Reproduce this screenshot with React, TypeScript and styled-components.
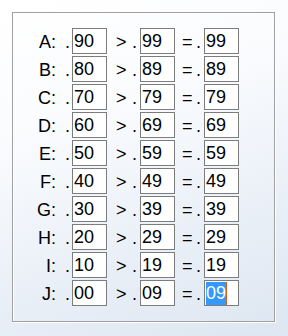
import styled, { createGlobalStyle } from "styled-components";

const GlobalStyle = createGlobalStyle`
	html, body {
		margin: 0;
		padding: 0;
	}
	body {
		font-family: "Liberation Sans", Arial, sans-serif;
		background: linear-gradient(160deg, #ffffff 0%, #fbfcfe 30%, #e9eff7 70%, #dde6f1 100%);
		min-height: 336px;
		width: 288px;
		overflow: hidden;
	}
`;

const Page = styled.div`
	padding: 12px;
	width: 288px;
	height: 336px;
	box-sizing: border-box;
`;

const GroupBox = styled.div`
	width: 263px;
	height: 310px;
	box-sizing: border-box;
	border: 1px solid #a0a0a0;
	box-shadow: 1px 1px 0 #ffffff, inset 1px 1px 0 #ffffff;
	padding-top: 15px;
	display: flex;
	flex-direction: column;
	gap: 2px;
`;

const Row = styled.div`
	display: flex;
	align-items: flex-start;
	height: 26px;
	font-size: 18px;
	color: #000;
`;

const Label = styled.span`
	width: 44px;
	padding-right: 1px;
	box-sizing: border-box;
	text-align: right;
	line-height: 28px;
	height: 26px;
`;

const Dot = styled.span`
	width: 15px;
	padding-right: 2px;
	box-sizing: border-box;
	text-align: right;
	line-height: 28px;
	height: 26px;
`;

const Op = styled.span<{ $width: number; $lead: number }>`
	width: ${({ $width }) => $width}px;
	padding-left: ${({ $lead }) => $lead}px;
	padding-right: 3px;
	box-sizing: border-box;
	display: flex;
	justify-content: space-between;
	line-height: 28px;
	height: 26px;
`;

const Field = styled.div`
	width: 35px;
	height: 26px;
	box-sizing: border-box;
	border: 1px solid #7c7c7c;
	background: #ffffff;
	padding-left: 1px;
	line-height: 26px;
	margin-top: 0;
	display: flex;
	align-items: flex-start;
	& > span.plain {
		line-height: 25px;
	}
`;

const Selected = styled.span`
	display: block;
	margin-top: 1px;
	height: 23px;
	line-height: 23px;
	background: #3399ff;
	color: #ffffff;
	border-right: 1px solid #c8641e;
`;

const rows = [
	["A", "90", "99"],
	["B", "80", "89"],
	["C", "70", "79"],
	["D", "60", "69"],
	["E", "50", "59"],
	["F", "40", "49"],
	["G", "30", "39"],
	["H", "20", "29"],
	["I", "10", "19"],
	["J", "00", "09"],
];

export default function App() {
	return (
		<>
			<GlobalStyle />
			<Page>
				<GroupBox>
					{rows.map(([letter, low, high], i) => {
						const last = i === rows.length - 1;
						return (
							<Row key={letter}>
								<Label>{letter}:</Label>
								<Dot>.</Dot>
								<Field>
									<span className="plain">{low}</span>
								</Field>
								<Op $width={33} $lead={9}>
									<span>&gt;</span>
									<span>.</span>
								</Op>
								<Field>
									<span className="plain">{high}</span>
								</Field>
								<Op $width={29} $lead={7}>
									<span>=</span>
									<span>.</span>
								</Op>
								<Field>
									{last ? <Selected>{high}</Selected> : <span className="plain">{high}</span>}
								</Field>
							</Row>
						);
					})}
				</GroupBox>
			</Page>
		</>
	);
}
